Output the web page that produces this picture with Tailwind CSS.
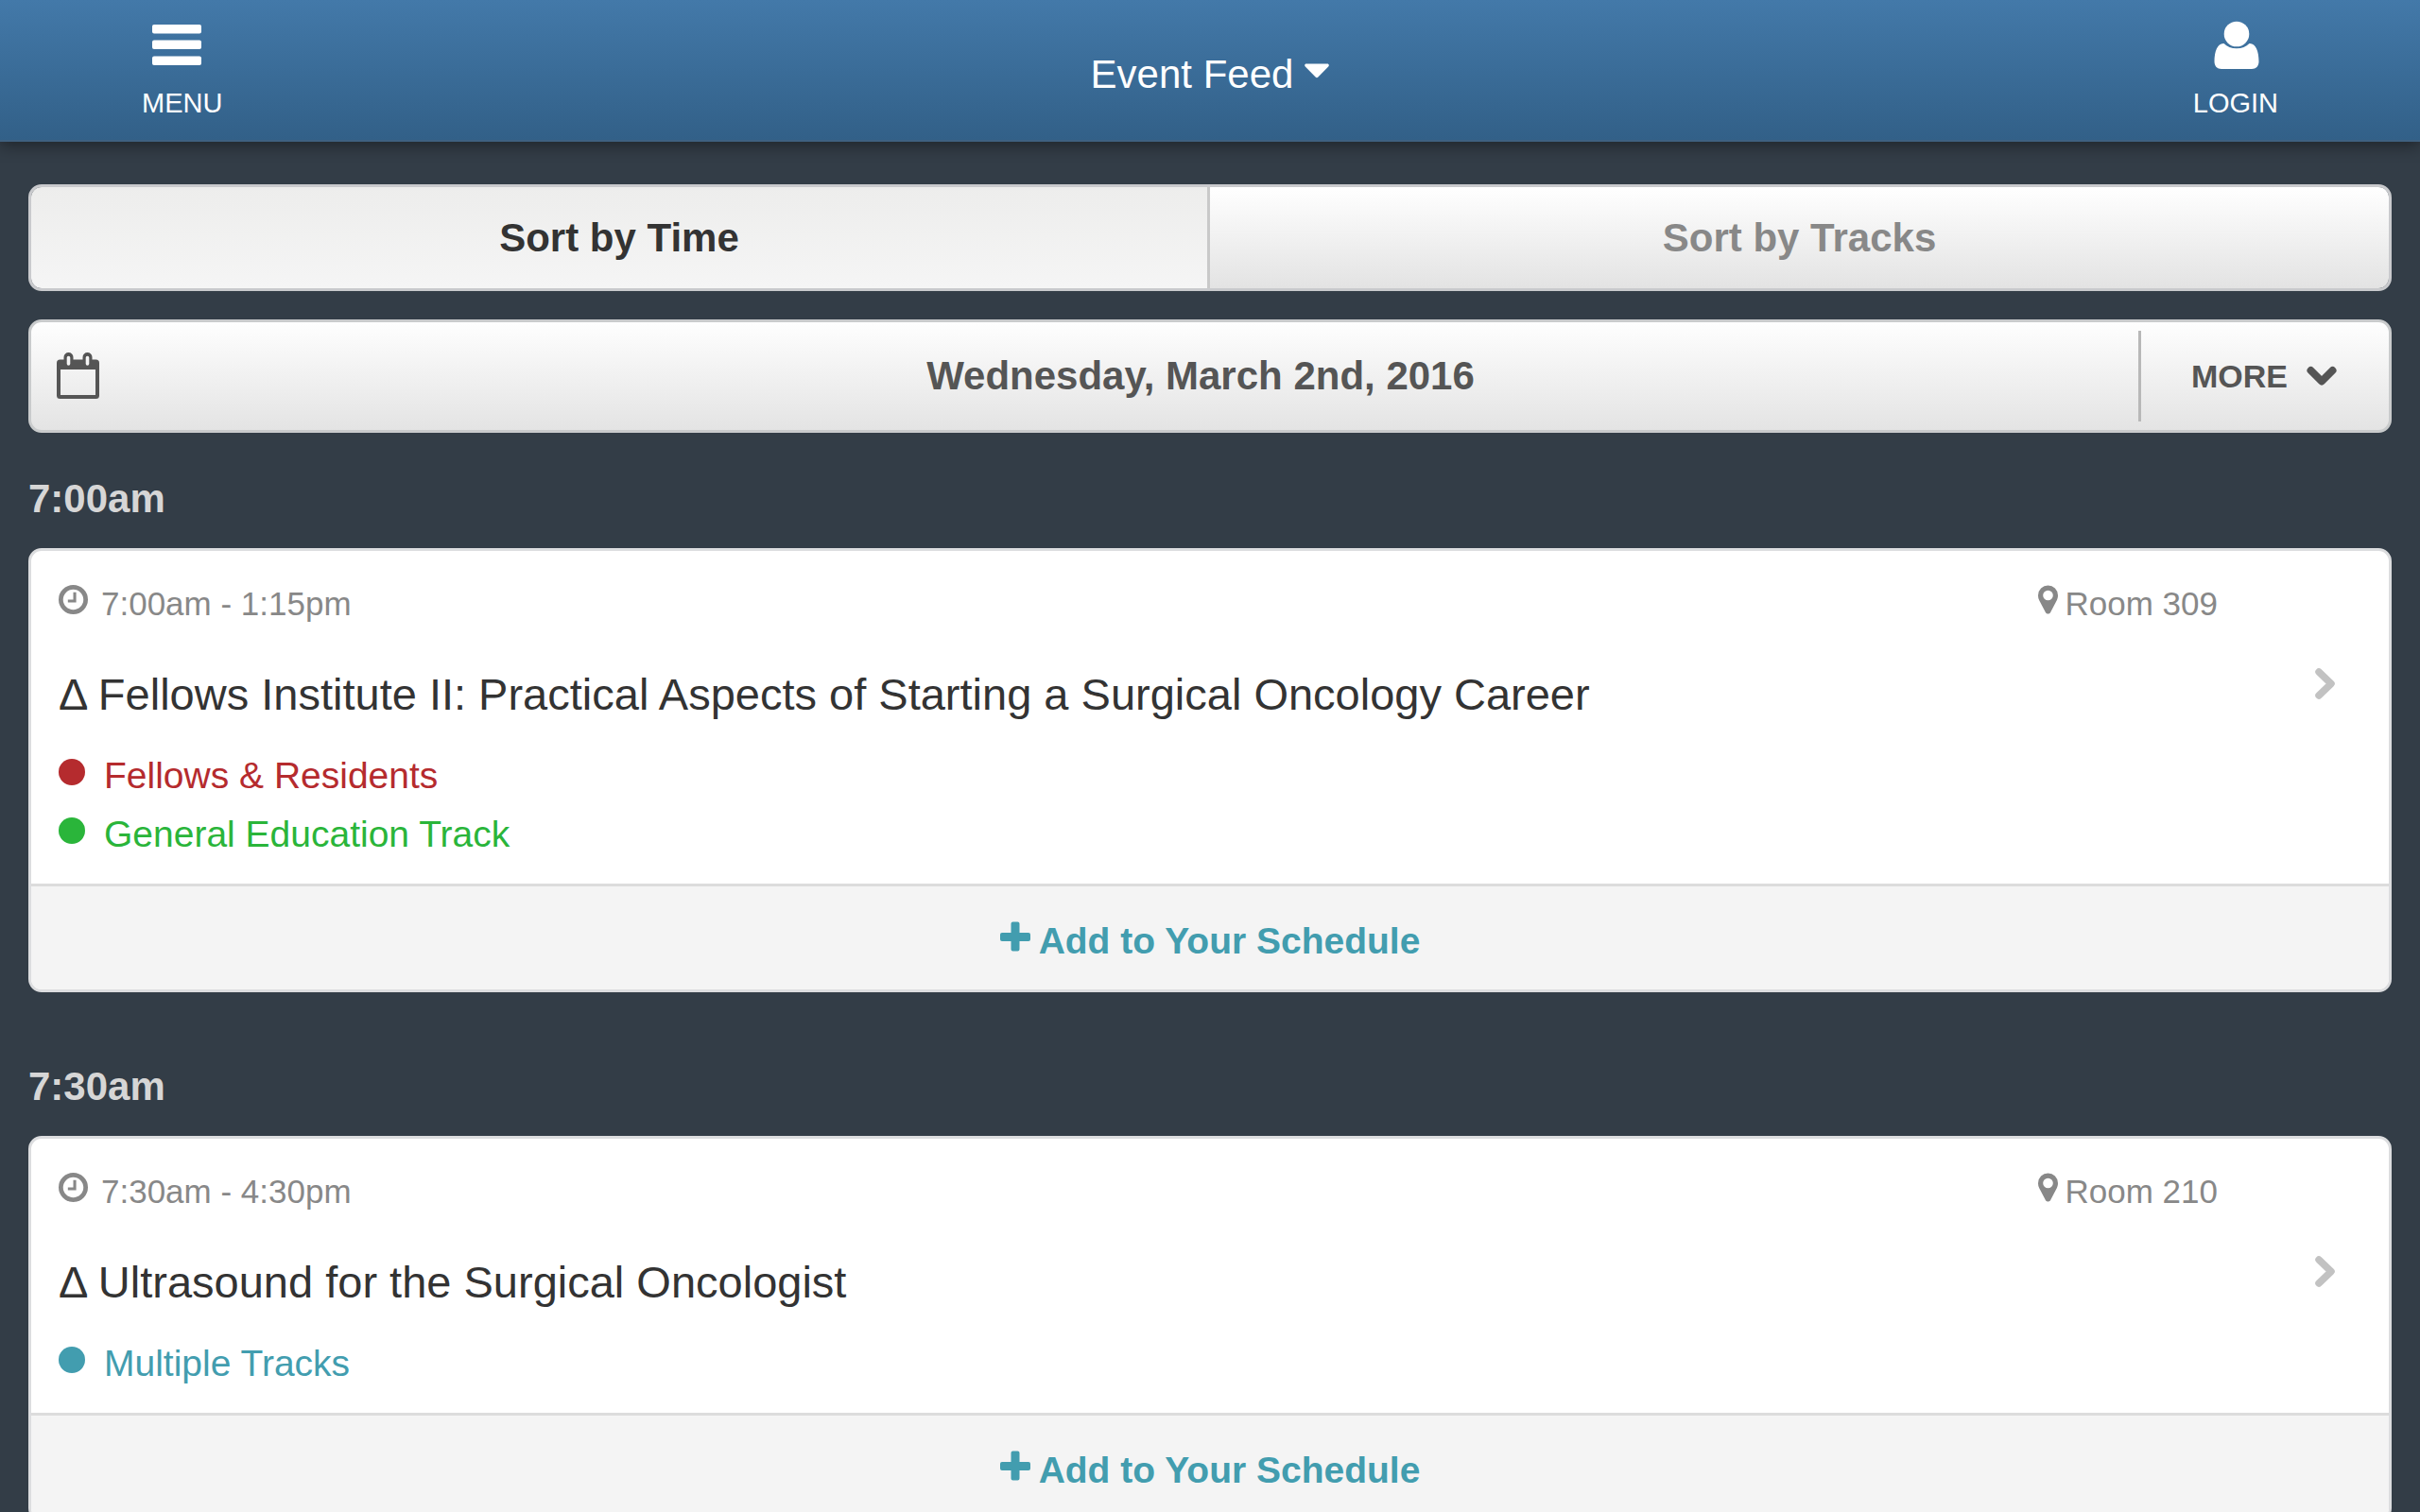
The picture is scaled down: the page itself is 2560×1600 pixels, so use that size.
<!DOCTYPE html>
<html lang="en">
<head>
<meta charset="utf-8">
<meta name="viewport" content="width=device-width, initial-scale=1">
<title>Event Feed</title>
<script src="https://cdn.jsdelivr.net/npm/@tailwindcss/browser@4"></script>
</head>
<body class="min-h-screen bg-[#333d47] font-['Liberation_Sans',Arial,sans-serif]">

<header class="relative grid h-[150px] grid-cols-[1fr_auto_1fr] items-center border-b-2 border-[#3f6180] bg-linear-to-b from-[#4379a9] to-[#326088] px-[150px] text-white shadow-[0_4px_16px_rgba(0,0,0,0.4)]">
  <button type="button" class="flex flex-col items-start justify-self-start text-[29px] leading-[34px]">
    <svg class="ml-[10px] h-[54px] w-[54px]" viewBox="0 0 54 54" fill="currentColor" aria-hidden="true">
      <rect x="1" y="4" width="52" height="9.500" rx="2"/><rect x="1" y="20.500" width="52" height="9.500" rx="2"/><rect x="1" y="37.500" width="52" height="9.500" rx="2"/>
    </svg>
    <span class="mt-4">MENU</span>
  </button>
  <button type="button" class="flex items-center gap-3 pt-[10px] text-[42px] leading-[48px]">
    <span>Event Feed</span>
    <svg class="mb-2 h-[16px] w-[26px]" viewBox="0 0 26 16" fill="currentColor" aria-hidden="true"><path d="M2 0.500h22c1.800 0 2.400 1.700 1.200 2.900L14.400 14.600c-.8.800-2 .8-2.800 0L.8 3.400C-.4 2.200.2.500 2 .5z"/></svg>
  </button>
  <button type="button" class="flex flex-col items-center justify-self-end text-[29px] leading-[34px]">
    <svg class="h-[54px] w-[54px]" viewBox="0 0 54 54" fill="currentColor" aria-hidden="true">
      <circle cx="28" cy="14" r="13.300"/>
      <path d="M14.500 24c3.500 3.400 8 5.300 13.500 5.300S38 27.400 41.500 24c6.500-.5 10 8 10 19 0 5-3 8-7.500 8H12c-4.500 0-7.500-3-7.500-8 0-11 3.500-19.500 10-19z"/>
    </svg>
    <span class="mt-4">LOGIN</span>
  </button>
</header>

<main class="px-[30px] pt-[45px]">
  <div class="grid h-[113px] grid-cols-2 overflow-hidden rounded-[14px] border-3 border-[#c9cacd] text-[42px] leading-[48px] font-bold">
    <button type="button" aria-pressed="true" class="border-r-3 border-[#c9c9c9] bg-linear-to-b from-[#ededec] to-[#f5f5f5] text-[#333]">Sort by Time</button>
    <button type="button" aria-pressed="false" class="bg-linear-to-b from-white to-[#e3e3e3] text-[#888]">Sort by Tracks</button>
  </div>

  <div class="mt-[30px] grid h-[120px] grid-cols-[245px_1fr_265px] items-center rounded-[14px] border-3 border-[#c9cbcc] bg-linear-to-b from-white to-[#e3e3e3] bg-origin-border font-bold text-[#555]">
    <svg class="ml-[27px] h-[50px] w-[45px]" viewBox="0 0 45 50" fill="currentColor" aria-label="Calendar" role="img">
      <path fill-rule="evenodd" d="M3.500 7.500H7.500V5A5 5 0 0 1 17.500 5V7.500H27.500V5A5 5 0 0 1 37.500 5V7.500h4A3.500 3.500 0 0 1 45 11v34.500a3.500 3.500 0 0 1-3.500 3.500h-38A3.500 3.500 0 0 1 0 45.500V11A3.500 3.500 0 0 1 3.500 7.500zM4 18V45h37V18zM10.700 5.500V12a1.800 1.800 0 0 0 3.600 0V5.500a1.800 1.800 0 0 0-3.600 0zm20 0V12a1.800 1.800 0 0 0 3.600 0V5.500a1.800 1.800 0 0 0-3.600 0z"/>
    </svg>
    <h1 class="text-center text-[42px] leading-[48px]">Wednesday, March 2nd, 2016</h1>
    <button type="button" class="flex h-[96px] items-center gap-5 border-l-3 border-[#b8b8b8] pl-[53px] text-[34px] leading-[40px] font-bold">
      <span>MORE</span>
      <svg class="h-[22px] w-[32px]" viewBox="0 0 32 22" fill="none" stroke="currentColor" stroke-width="8" stroke-linecap="round" stroke-linejoin="round" aria-hidden="true"><path d="M4.500 5 16 16.500 27.500 5"/></svg>
    </button>
  </div>

  <section class="mb-[30px]">
    <h2 class="pt-[46px] pb-[28px] text-[42px] leading-[48px] font-bold text-[#d6d6d6]">7:00am</h2>
    <article class="overflow-hidden rounded-[14px] border-3 border-[#dcdddf] bg-white">
      <a href="#fellows-institute" class="flex items-start pt-[36px] pr-[56px] pb-[21px] pl-[29px]">
        <div class="flex-1">
          <div class="flex justify-between text-[35px] leading-[40px] text-[#888]">
            <p class="flex gap-[14px]">
              <svg class="h-[31px] w-[31px]" viewBox="0 0 30 30" fill="none" stroke="currentColor" aria-hidden="true"><circle cx="15" cy="15" r="12.700" stroke-width="4.600"/><path d="M16.500 7.500v9H9.500" stroke-width="3"/></svg>
              <span>7:00am - 1:15pm</span>
            </p>
            <p class="flex gap-2">
              <svg class="h-[31px] w-[21px]" viewBox="0 0 21 30" fill="currentColor" aria-hidden="true"><path fill-rule="evenodd" d="M10.500 0A10.500 10.500 0 0 1 21 10.500c0 2-.5 3.800-1.200 5.300l-6.700 12.600c-1.100 2.100-4.100 2.100-5.200 0L1.200 15.800A12 12 0 0 1 0 10.500 10.500 10.500 0 0 1 10.500 0zm0 5.200a5.300 5.300 0 1 0 0 10.600 5.300 5.300 0 0 0 0-10.600z"/></svg>
              <span>Room 309</span>
            </p>
          </div>
          <h3 class="mt-12 text-[47px] leading-[56px] text-[#333]">Δ Fellows Institute II: Practical Aspects of Starting a Surgical Oncology Career</h3>
          <ul class="mt-[27px] text-[39px] leading-[62px]">
            <li class="flex gap-5 text-[#b52b2e]"><span class="mt-[13px] size-7 rounded-full bg-current"></span>Fellows &amp; Residents</li>
            <li class="flex gap-5 text-[#2ab53a]"><span class="mt-[13px] size-7 rounded-full bg-current"></span>General Education Track</li>
          </ul>
        </div>
        <svg class="mt-[87px] ml-[102px] h-[35px] w-[23px] text-[#c2c2c2]" viewBox="0 0 23 35" fill="none" stroke="currentColor" stroke-width="7.500" stroke-linecap="round" stroke-linejoin="round" aria-hidden="true"><path d="M5 5 18 17.500 5 30"/></svg>
      </a>
      <button type="button" class="flex h-[112px] w-full items-center justify-center gap-[9px] border-t-3 border-[#dcdcdc] bg-[#f4f4f4] text-[39px] leading-[44px] font-bold text-[#429daf]">
        <svg class="mb-1 h-[32px] w-[32px]" viewBox="0 0 32 32" fill="currentColor" aria-hidden="true"><path d="M13.500.5h5a2 2 0 0 1 2 2v9.500h9.500a2 2 0 0 1 2 2v5a2 2 0 0 1-2 2h-9.500v8.500a2 2 0 0 1-2 2h-5a2 2 0 0 1-2-2V21H2a2 2 0 0 1-2-2v-5a2 2 0 0 1 2-2h9.500V2.500a2 2 0 0 1 2-2z"/></svg>
        <span class="pt-[6px]">Add to Your Schedule</span>
      </button>
    </article>
  </section>

  <section>
    <h2 class="pt-[46px] pb-[28px] text-[42px] leading-[48px] font-bold text-[#d6d6d6]">7:30am</h2>
    <article class="overflow-hidden rounded-[14px] border-3 border-[#dcdddf] bg-white">
      <a href="#ultrasound" class="flex items-start pt-[36px] pr-[56px] pb-[21px] pl-[29px]">
        <div class="flex-1">
          <div class="flex justify-between text-[35px] leading-[40px] text-[#888]">
            <p class="flex gap-[14px]">
              <svg class="h-[31px] w-[31px]" viewBox="0 0 30 30" fill="none" stroke="currentColor" aria-hidden="true"><circle cx="15" cy="15" r="12.700" stroke-width="4.600"/><path d="M16.500 7.500v9H9.500" stroke-width="3"/></svg>
              <span>7:30am - 4:30pm</span>
            </p>
            <p class="flex gap-2">
              <svg class="h-[31px] w-[21px]" viewBox="0 0 21 30" fill="currentColor" aria-hidden="true"><path fill-rule="evenodd" d="M10.500 0A10.500 10.500 0 0 1 21 10.500c0 2-.5 3.800-1.200 5.300l-6.700 12.600c-1.100 2.100-4.100 2.100-5.200 0L1.200 15.800A12 12 0 0 1 0 10.500 10.500 10.500 0 0 1 10.500 0zm0 5.200a5.300 5.300 0 1 0 0 10.600 5.300 5.300 0 0 0 0-10.600z"/></svg>
              <span>Room 210</span>
            </p>
          </div>
          <h3 class="mt-12 text-[47px] leading-[56px] text-[#333]">Δ Ultrasound for the Surgical Oncologist</h3>
          <ul class="mt-[27px] text-[39px] leading-[62px]">
            <li class="flex gap-5 text-[#429daf]"><span class="mt-[13px] size-7 rounded-full bg-current"></span>Multiple Tracks</li>
          </ul>
        </div>
        <svg class="mt-[87px] ml-[102px] h-[35px] w-[23px] text-[#c2c2c2]" viewBox="0 0 23 35" fill="none" stroke="currentColor" stroke-width="7.500" stroke-linecap="round" stroke-linejoin="round" aria-hidden="true"><path d="M5 5 18 17.500 5 30"/></svg>
      </a>
      <button type="button" class="flex h-[112px] w-full items-center justify-center gap-[9px] border-t-3 border-[#dcdcdc] bg-[#f4f4f4] text-[39px] leading-[44px] font-bold text-[#429daf]">
        <svg class="mb-1 h-[32px] w-[32px]" viewBox="0 0 32 32" fill="currentColor" aria-hidden="true"><path d="M13.500.5h5a2 2 0 0 1 2 2v9.500h9.500a2 2 0 0 1 2 2v5a2 2 0 0 1-2 2h-9.500v8.500a2 2 0 0 1-2 2h-5a2 2 0 0 1-2-2V21H2a2 2 0 0 1-2-2v-5a2 2 0 0 1 2-2h9.500V2.500a2 2 0 0 1 2-2z"/></svg>
        <span class="pt-[6px]">Add to Your Schedule</span>
      </button>
    </article>
  </section>
</main>
</body>
</html>
